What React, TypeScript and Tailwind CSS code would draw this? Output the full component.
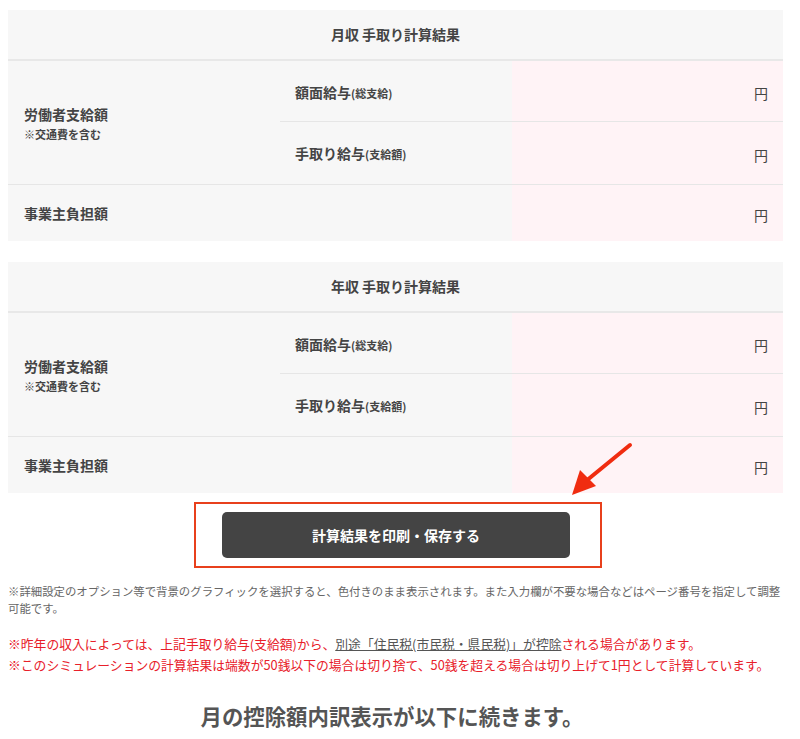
const font = { fontFamily: '"Noto Sans CJK JP", "Noto Sans", sans-serif' };

function ResultTable({ title }: { title: string }) {
  return (
    <div className="bg-[#f7f7f7] text-[#444]">
      <div className="h-[51px] flex items-center justify-center border-b-2 border-[#e8e8e8] text-[14px] font-bold">
        {title}
      </div>
      <div className="flex">
        <div className="w-[272px] pl-4 flex flex-col justify-center">
          <div className="text-[14px] font-bold leading-[20px]">労働者支給額</div>
          <div className="text-[11px] font-bold leading-[16px] mt-[2px]">※交通費を含む</div>
        </div>
        <div className="flex-1 flex flex-col">
          <div className="flex h-[61px] border-b border-[#e6e6e6]">
            <div className="w-[232px] pl-[15px] pt-[21px] text-[14px] font-bold leading-[20px]">
              額面給与<span className="text-[11px]">(総支給)</span>
            </div>
            <div className="flex-1 bg-[#fff3f6] flex items-center justify-end pr-[15px] pt-[4px] text-[14px]">
              円
            </div>
          </div>
          <div className="flex h-[62px]">
            <div className="w-[232px] pl-[15px] pt-[21px] text-[14px] font-bold leading-[20px]">
              手取り給与<span className="text-[11px]">(支給額)</span>
            </div>
            <div className="flex-1 bg-[#fff3f6] flex items-center justify-end pr-[15px] pt-[4px] text-[14px]">
              円
            </div>
          </div>
        </div>
      </div>
      <div className="flex h-[57px] border-t border-[#e6e6e6]">
        <div className="w-[504px] pl-4 flex items-center text-[14px] font-bold">事業主負担額</div>
        <div className="flex-1 bg-[#fff3f6] flex items-center justify-end pr-[15px] pt-[4px] text-[14px]">
          円
        </div>
      </div>
    </div>
  );
}

export default function App() {
  return (
    <div className="relative bg-white w-[800px] h-[739px] overflow-hidden" style={font}>
      <div className="pt-[10px] pl-2 pr-[17px] flex flex-col">
        <ResultTable title="月収 手取り計算結果" />
        <div className="h-[21px]" />
        <ResultTable title="年収 手取り計算結果" />

        <div className="flex justify-center mt-[9px]">
          <div className="w-[408px] h-[66px] border-2 border-[#e8401c] flex items-center justify-center ml-[5px] pr-[4px]">
            <button className="w-[348px] h-[46px] rounded-[5px] bg-[#444] text-white text-[14px] font-bold">
              計算結果を印刷・保存する
            </button>
          </div>
        </div>

        <p className="mt-[15px] text-[11.4px] leading-[17px] text-[#666]">
          ※詳細設定のオプション等で背景のグラフィックを選択すると、色付きのまま表示されます。また入力欄が不要な場合などはページ番号を指定して調整可能です。
        </p>

        <div className="mt-[16px] text-[12.8px] leading-[21px] text-[#e8202a]">
          <p>
            ※昨年の収入によっては、上記手取り給与(支給額)から、
            <span className="text-[#555] underline">別途「住民税(市民税・県民税)」が控除</span>
            される場合があります。
          </p>
          <p>
            ※このシミュレーションの計算結果は端数が50銭以下の場合は切り捨て、50銭を超える場合は切り上げて1円として計算しています。
          </p>
        </div>

        <h2 className="mt-[25px] text-center text-[21.4px] font-bold text-[#555] pr-[7px]">
          月の控除額内訳表示が以下に続きます。
        </h2>
      </div>

      <svg className="absolute left-[560px] top-[438px]" width="80" height="62" viewBox="0 0 80 62">
        <line x1="70" y1="7" x2="26" y2="43" stroke="#f02c10" strokeWidth="4" strokeLinecap="round" />
        <polygon points="12,57 20,32 36,48" fill="#f02c10" />
      </svg>
    </div>
  );
}
